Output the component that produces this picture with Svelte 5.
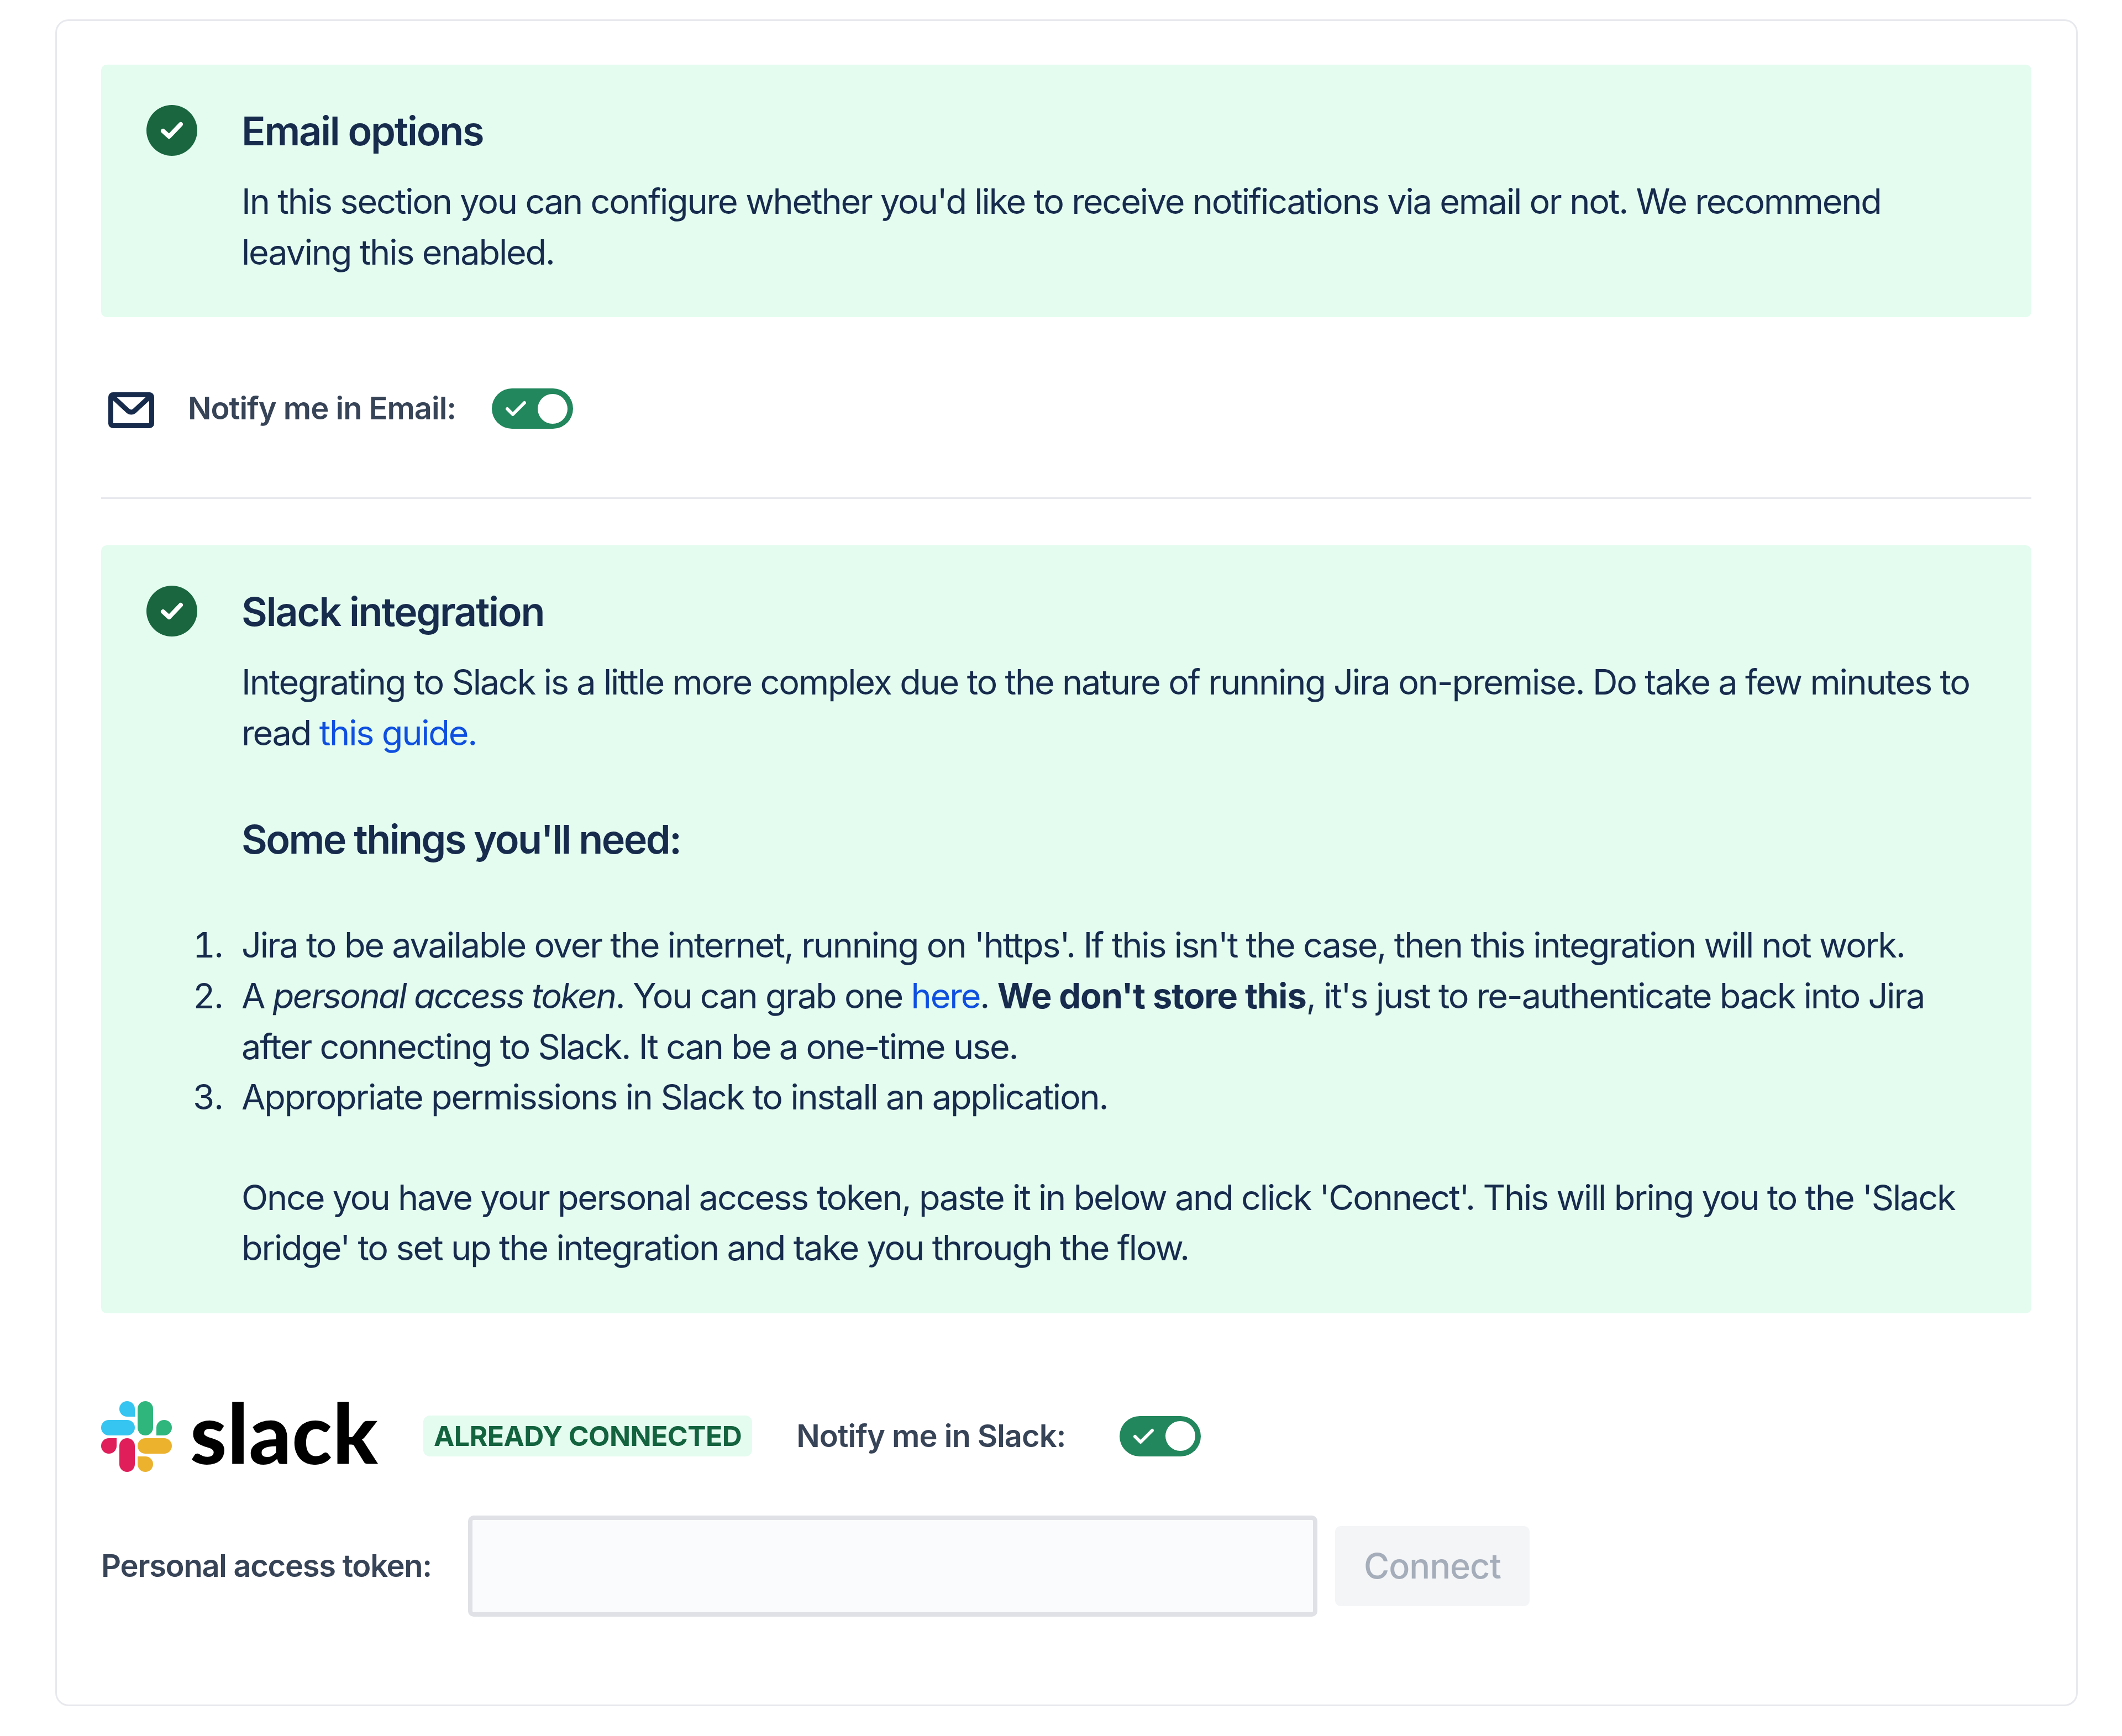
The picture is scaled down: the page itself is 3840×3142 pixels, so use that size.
<script>
	let emailOn = true;
	let slackOn = true;
</script>

{#snippet toggle(label)}
	<span class="toggle" role="switch" aria-checked="true" aria-label={label}>
		<svg class="tick" viewBox="0 0 37 29" fill="none" stroke="#fff" stroke-width="6" stroke-linecap="round" stroke-linejoin="round">
			<path d="M3 15l10 10L34 4" />
		</svg>
		<span class="knob"></span>
	</span>
{/snippet}

{#snippet statusIcon()}
	<svg class="status" viewBox="0 0 92 92">
		<circle cx="46" cy="46" r="46" fill="#19663f" />
		<path d="M30 47l11 10 21-22" fill="none" stroke="#fff" stroke-width="8" stroke-linecap="round" stroke-linejoin="round" />
	</svg>
{/snippet}

<main class="card">
	<section class="panel">
		{@render statusIcon()}
		<div class="body">
			<h2>Email options</h2>
			<p class="first">In this section you can configure whether you'd like to receive notifications via email or not. We recommend leaving this enabled.</p>
		</div>
	</section>

	<div class="row email-row">
		<svg class="mail" viewBox="0 0 83 65" fill="none" stroke="#172b4d" stroke-width="9" stroke-linejoin="round" stroke-linecap="round">
			<rect x="4.500" y="4.500" width="74" height="56" rx="4" />
			<path d="M9 9l27 25q5.500 4 11 0L74 9" />
		</svg>
		<span class="label email-label">Notify me in Email:</span>
		{#if emailOn}{@render toggle('Notify me in Email')}{/if}
	</div>

	<hr />

	<section class="panel">
		{@render statusIcon()}
		<div class="body">
			<h2>Slack integration</h2>
			<p class="first">Integrating to Slack is a little more complex due to the nature of running Jira on-premise. Do take a few minutes to read <a href="#guide">this guide.</a></p>
			<h2 class="sub">Some things you'll need:</h2>
			<ol>
				<li>Jira to be available over the internet, running on 'https'. If this isn't the case, then this integration will not work.</li>
				<li>A <em>personal access token</em>. You can grab one <a href="#token">here</a>. <strong>We don't store this</strong>, it's just to re-authenticate back into Jira after connecting to Slack. It can be a one-time use.</li>
				<li>Appropriate permissions in Slack to install an application.</li>
			</ol>
			<p class="last">Once you have your personal access token, paste it in below and click 'Connect'. This will bring you to the 'Slack bridge' to set up the integration and take you through the flow.</p>
		</div>
	</section>

	<div class="row slack-row">
		<svg class="slack-mark" viewBox="0 0 128 129">
			<path fill="#36c5f0" d="M61 29H47a14 14 0 1 1 14-14z" />
			<rect fill="#36c5f0" x="0" y="35" width="61" height="28" rx="14" />
			<rect fill="#2eb67d" x="66" y="1" width="28" height="62" rx="14" />
			<path fill="#2eb67d" d="M100 63V49a14 14 0 1 1 14 14z" />
			<path fill="#e01e5a" d="M28 68v14a14 14 0 1 1-14-14z" />
			<rect fill="#e01e5a" x="33" y="68" width="28" height="61" rx="14" />
			<rect fill="#ecb22e" x="66" y="68" width="62" height="28" rx="14" />
			<path fill="#ecb22e" d="M66 101h14a14 14 0 1 1-14 14z" />
		</svg>
		<span class="wordmark">slack</span>
		<span class="badge">ALREADY CONNECTED</span>
		<span class="label slack-label">Notify me in Slack:</span>
		{#if slackOn}{@render toggle('Notify me in Slack')}{/if}
	</div>

	<form class="row token-row" onsubmit={(e) => e.preventDefault()}>
		<label class="label" for="token">Personal access token:</label>
		<input id="token" type="text" />
		<button type="submit" disabled>Connect</button>
	</form>
</main>

<style>
	:global(body) {
		margin: 0;
		background: #fff;
	}
	.card {
		box-sizing: border-box;
		width: 3660px;
		height: 3053px;
		margin: 35px 0 0 100px;
		padding: 79px 81px 0 80px;
		border: 3px solid #e8e9ee;
		border-radius: 24px;
		font-family: Inter, "Liberation Sans", sans-serif;
		font-size: 63px;
		letter-spacing: -2.2px;
		line-height: 91.600px;
		color: #172b4d;
	}
	.panel {
		display: flex;
		align-items: flex-start;
		box-sizing: border-box;
		padding: 74px 90px 72px 82px;
		background: #e3fcef;
		border-radius: 10px;
	}
	.status {
		flex: none;
		width: 92px;
		height: 92px;
		margin: -1px 80px 0 0;
	}
	.body {
		flex: 1;
		min-width: 0;
	}
	h2 {
		margin: 0;
		font-size: 72px;
		font-weight: 600;
		line-height: 92px;
		letter-spacing: -2.200px;
	}
	p {
		margin: 0;
	}
	.first {
		margin-top: 36px;
	}
	.sub {
		margin-top: 101px;
		letter-spacing: -2.600px;
	}
	ol {
		margin: 100px 0 0;
		padding: 0;
		list-style-position: outside;
	}
	li {
		margin-left: -20px;
		padding-left: 20px;
	}
	em {
		letter-spacing: -2.600px;
	}
	.last {
		margin-top: 90px;
	}
	a {
		color: #0f4fe0;
		text-decoration: none;
	}
	strong {
		font-weight: 700;
		letter-spacing: -1px;
	}
	.row {
		display: flex;
		align-items: center;
	}
	.email-row {
		height: 73px;
		margin-top: 129px;
	}
	.mail {
		width: 83px;
		height: 65px;
		margin: 6px 61px 0 13px;
	}
	.label {
		font-size: 56px;
		font-weight: 600;
		letter-spacing: -1px;
		color: #374357;
		white-space: nowrap;
	}
	.email-label {
		margin-right: 65px;
	}
	.toggle {
		display: flex;
		flex: none;
		align-items: center;
		justify-content: space-between;
		box-sizing: border-box;
		width: 147px;
		height: 73px;
		padding: 0 10px 0 25px;
		background: #22875c;
		border-radius: 37px;
	}
	.tick {
		width: 37px;
		height: 29px;
	}
	.knob {
		width: 54px;
		height: 54px;
		background: #fff;
		border-radius: 50%;
	}
	hr {
		height: 3px;
		margin: 124px 0 84px;
		border: 0;
		background: #e8e9ee;
	}
	.slack-row {
		height: 129px;
		margin-top: 158px;
	}
	.slack-mark {
		width: 128px;
		height: 129px;
		margin-right: 33px;
	}
	.wordmark {
		width: 341px;
		margin: -14px 81px 0 0;
		font-family: Lato, sans-serif;
		font-size: 150px;
		font-weight: 900;
		line-height: 129px;
		letter-spacing: 1px;
		color: #000;
	}
	.badge {
		display: block;
		margin-right: 80px;
		padding: 0 19px;
		background: #e3fcef;
		border-radius: 12px;
		font-size: 50px;
		font-weight: 700;
		line-height: 74px;
		letter-spacing: -0.600px;
		color: #14633f;
		white-space: nowrap;
	}
	.slack-label {
		margin-right: 98px;
	}
	.token-row {
		margin-top: 79px;
	}
	.token-row label {
		width: 664px;
		letter-spacing: -1.300px;
	}
	input {
		box-sizing: border-box;
		width: 1537px;
		height: 183px;
		margin-right: 32px;
		background: #fafbfc;
		border: 8px solid #dfe1e6;
		border-radius: 10px;
	}
	button {
		width: 352px;
		height: 145px;
		padding: 0;
		background: #f4f5f7;
		border: 0;
		border-radius: 10px;
		font: 500 63px Inter, "Liberation Sans", sans-serif;
		letter-spacing: -1px;
		color: #a5adba;
	}
</style>
